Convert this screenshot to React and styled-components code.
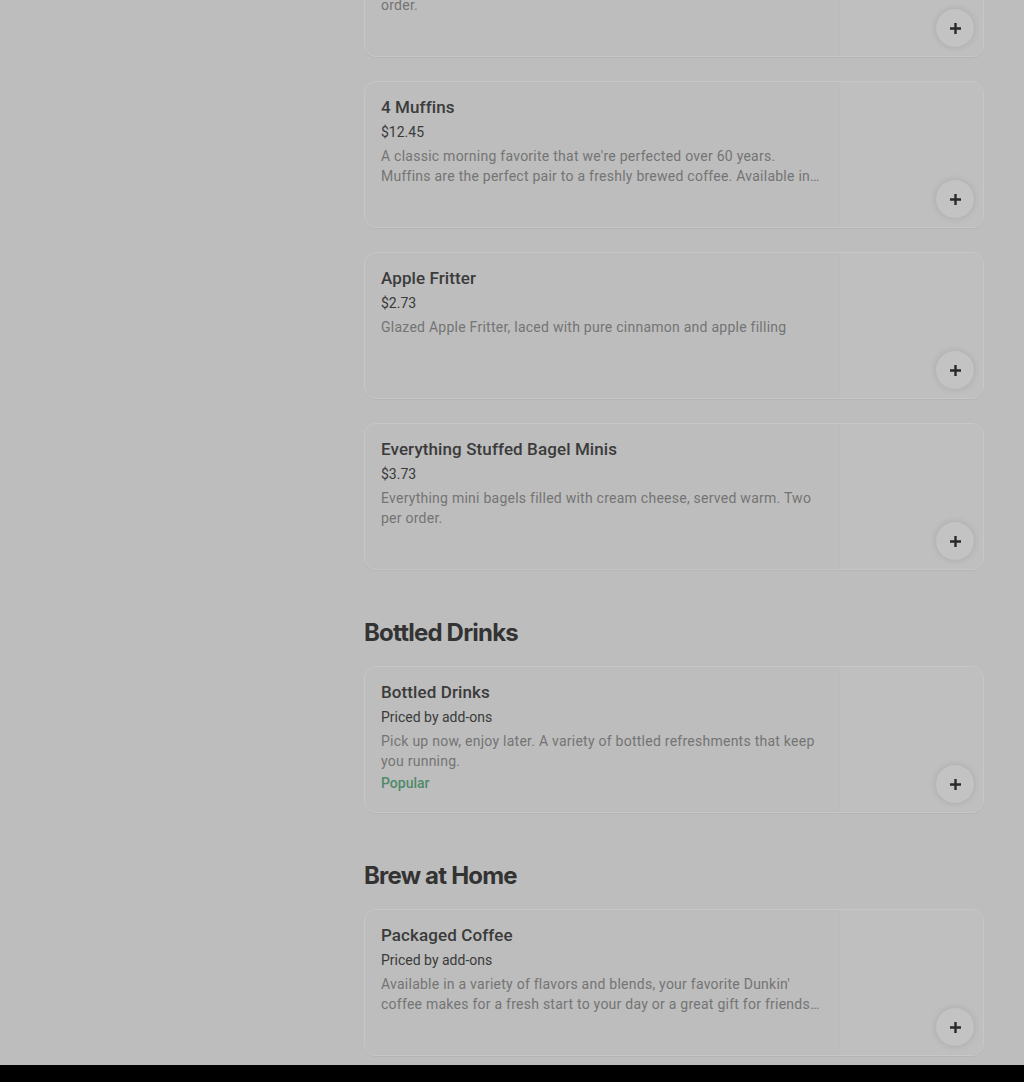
import React from 'react';
import styled, { createGlobalStyle } from 'styled-components';

const GlobalStyle = createGlobalStyle`
  body {
    margin: 0;
    background: #bdbdbd;
    font-family: Roboto, "Liberation Sans", sans-serif;
  }
`;

const Page = styled.div`
  display: grid;
  grid-template-columns: 364px 620px;
  padding-right: 40px;
  padding-bottom: 9px;
`;

const Sidebar = styled.aside``;

const Menu = styled.main`
  display: flex;
  flex-direction: column;
  gap: 47px;
  margin-top: -90px;
`;

const Section = styled.section`
  display: flex;
  flex-direction: column;
`;

const SectionTitle = styled.h2`
  margin: 0 0 17px;
  font-family: Inter, "Liberation Sans", sans-serif;
  font-size: 24px;
  line-height: 32px;
  font-weight: 700;
  letter-spacing: -0.8px;
  color: #333;
`;

const CardList = styled.div`
  display: flex;
  flex-direction: column;
  gap: 24px;
`;

const Card = styled.article`
  position: relative;
  display: flex;
  justify-content: space-between;
  height: 147px;
  box-sizing: border-box;
  border: 1px solid #c7c7c7;
  border-radius: 12px;
  box-shadow: 0 1px 0 rgba(0, 0, 0, 0.04);
  overflow: hidden;
`;

const Info = styled.div`
  width: 440px;
  padding: 13px 0 0 16px;
  display: flex;
  flex-direction: column;
`;

const Name = styled.div`
  font-size: 17px;
  line-height: 24px;
  font-weight: 500;
  letter-spacing: 0.1px;
  color: #3b3b3b;
`;

const Price = styled.div`
  font-size: 14px;
  line-height: 26px;
  color: #3a3a3a;
`;

const Desc = styled.p`
  margin: 1px 0 0;
  font-size: 14px;
  line-height: 20px;
  letter-spacing: 0.25px;
  color: #747474;
  display: -webkit-box;
  -webkit-line-clamp: 2;
  -webkit-box-orient: vertical;
  overflow: hidden;
`;

const Tag = styled.div`
  margin-top: 2px;
  font-size: 14px;
  line-height: 20px;
  font-weight: 500;
  color: #4f8a6a;
`;

const Thumb = styled.div`
  width: 143px;
  background: #bfbfbf;
  border-left: 1px solid #bbbbbb;
`;

const AddButton = styled.button`
  position: absolute;
  right: 9px;
  bottom: 9px;
  width: 38px;
  height: 38px;
  border: none;
  border-radius: 50%;
  padding: 0;
  display: flex;
  align-items: center;
  justify-content: center;
  background: #c3c3c3;
  box-shadow: 0 0 7px rgba(0, 0, 0, 0.12);
  color: #2a2a2a;
  cursor: pointer;
`;

const Footer = styled.footer`
  height: 17px;
  background: #000;
`;

const PlusIcon = () => (
  <svg width="13" height="13" viewBox="0 0 13 13" aria-hidden="true">
    <path d="M6.5 1v11M1 6.5h11" stroke="currentColor" strokeWidth="2.4" fill="none" />
  </svg>
);

const Item = ({ name, price, desc, tag }) => (
  <Card>
    <Info>
      <Name>{name}</Name>
      <Price>{price}</Price>
      <Desc>{desc}</Desc>
      {tag && <Tag>{tag}</Tag>}
    </Info>
    <Thumb />
    <AddButton aria-label={`Add ${name}`}>
      <PlusIcon />
    </AddButton>
  </Card>
);

const sections = [
  {
    items: [
      {
        name: 'Hash Browns',
        price: '$2.19',
        desc: (
          <>
            Crispy, golden bites seasoned with onion and black pepper. Six per
            <br />
            order.
          </>
        ),
      },
      {
        name: '4 Muffins',
        price: '$12.45',
        desc: "A classic morning favorite that we're perfected over 60 years. Muffins are the perfect pair to a freshly brewed coffee. Available in a variety of flavors.",
      },
      {
        name: 'Apple Fritter',
        price: '$2.73',
        desc: 'Glazed Apple Fritter, laced with pure cinnamon and apple filling',
      },
      {
        name: 'Everything Stuffed Bagel Minis',
        price: '$3.73',
        desc: 'Everything mini bagels filled with cream cheese, served warm. Two per order.',
      },
    ],
  },
  {
    title: 'Bottled Drinks',
    items: [
      {
        name: 'Bottled Drinks',
        price: 'Priced by add-ons',
        desc: 'Pick up now, enjoy later. A variety of bottled refreshments that keep you running.',
        tag: 'Popular',
      },
    ],
  },
  {
    title: 'Brew at Home',
    items: [
      {
        name: 'Packaged Coffee',
        price: 'Priced by add-ons',
        desc: "Available in a variety of flavors and blends, your favorite Dunkin' coffee makes for a fresh start to your day or a great gift for friends, family and coworkers.",
      },
    ],
  },
];

const App = () => (
  <>
    <GlobalStyle />
    <Page>
      <Sidebar />
      <Menu>
        {sections.map((section, i) => (
          <Section key={i}>
            {section.title && <SectionTitle>{section.title}</SectionTitle>}
            <CardList>
              {section.items.map((item) => (
                <Item key={item.name} {...item} />
              ))}
            </CardList>
          </Section>
        ))}
      </Menu>
    </Page>
    <Footer />
  </>
);

export default App;
